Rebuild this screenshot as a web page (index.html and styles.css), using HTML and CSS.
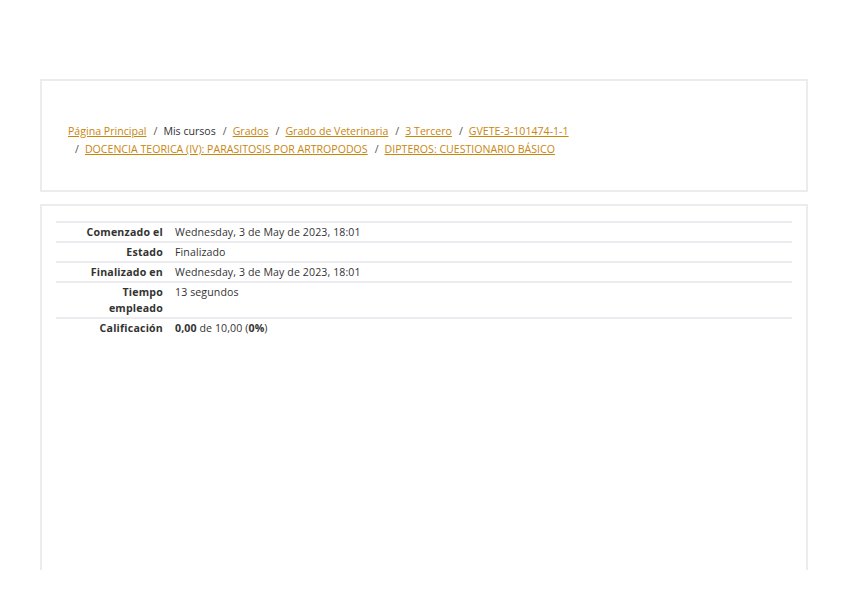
FILE: index.html
```html
<!DOCTYPE html>
<html lang="es">
<head>
  <meta charset="UTF-8">
  <title>DIPTEROS: CUESTIONARIO BÁSICO: Revisión del intento</title>
  <meta name="viewport" content="width=device-width, initial-scale=1.0">
  <link rel="stylesheet" href="styles.css">
</head>
<body>
  <div class="page">
    <header class="card page-header">
      <nav aria-label="Barra de navegación">
        <ol class="breadcrumb">
          <li><a href="#">Página Principal</a></li>
          <li><span>Mis cursos</span></li>
          <li><a href="#">Grados</a></li>
          <li><a href="#">Grado de Veterinaria</a></li>
          <li><a href="#">3 Tercero</a></li>
          <li><a href="#">GVETE-3-101474-1-1</a></li>
          <li><a href="#">DOCENCIA TEORICA (IV): PARASITOSIS POR ARTROPODOS</a></li>
          <li><a href="#">DIPTEROS: CUESTIONARIO BÁSICO</a></li>
        </ol>
      </nav>
    </header>

    <main class="card main-region">
      <table class="quizreviewsummary">
        <tbody>
          <tr>
            <th>Comenzado el</th>
            <td>Wednesday, 3 de May de 2023, 18:01</td>
          </tr>
          <tr>
            <th>Estado</th>
            <td>Finalizado</td>
          </tr>
          <tr>
            <th>Finalizado en</th>
            <td>Wednesday, 3 de May de 2023, 18:01</td>
          </tr>
          <tr>
            <th>Tiempo empleado</th>
            <td>13 segundos</td>
          </tr>
          <tr>
            <th>Calificación</th>
            <td><b>0,00</b> de 10,00 (<b>0%</b>)</td>
          </tr>
        </tbody>
      </table>
    </main>
  </div>
</body>
</html>
```

FILE: styles.css
```css
body {
  margin: 0;
  background-color: #fff;
  color: #333;
  font-family: "Open Sans", "Noto Sans", sans-serif;
  font-size: 10.6px;
  height: 599px;
  overflow: hidden;
}
.page {
  padding: 79px 40px 0 40px;
  display: flex;
  flex-direction: column;
  gap: 12px;
}
.card {
  border: 2px solid #ececec;
  background-color: #fff;
}
.page-header {
  height: 113px;
  box-sizing: border-box;
  padding: 41px 26px 0 26px;
}
.breadcrumb {
  list-style: none;
  margin: 0;
  padding: 0;
  display: flex;
  flex-wrap: wrap;
  line-height: 18px;
}
.breadcrumb li + li::before {
  content: "/";
  color: #555;
  padding: 0 6px 0 7px;
}
.breadcrumb a {
  color: #c8860d;
  text-decoration: underline;
}
.main-region {
  height: 366px;
  box-sizing: border-box;
  border-bottom: none;
  padding: 15px 14px 0 14px;
}
.quizreviewsummary {
  width: 100%;
  border-collapse: collapse;
  line-height: 16px;
}
.quizreviewsummary th,
.quizreviewsummary td {
  border-top: 2px solid #ececf0;
  padding: 1px 0 1px 0;
  vertical-align: top;
}
.quizreviewsummary th {
  width: 80px;
  text-align: right;
  font-weight: 700;
  padding-left: 27px;
  padding-right: 6px;
  letter-spacing: 0.2px;
}
.quizreviewsummary td {
  padding-left: 6px;
  letter-spacing: 0.1px;
}
.quizreviewsummary b {
  font-weight: 700;
}
```
